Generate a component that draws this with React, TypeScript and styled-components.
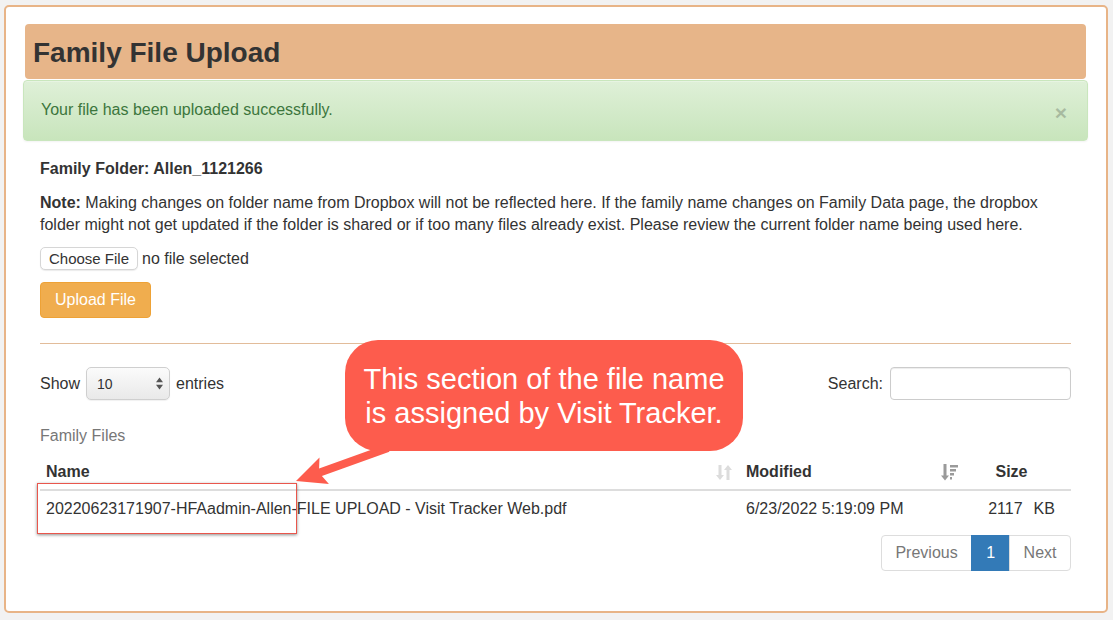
import React from "react";
import { createGlobalStyle, styled } from "styled-components";

const font = `"Liberation Sans", Arial, Helvetica, sans-serif`;
const orange = "#e8b487";

const GlobalCss = createGlobalStyle`
  html, body {
    margin: 0;
    padding: 0;
    background: #f2f2f2;
    color: #333;
    font-family: ${font};
    font-size: 16px;
    line-height: 22px;
  }
  * { box-sizing: border-box; }
`;

const Page = styled.div`
  padding: 5px 5px 6px 4px;
`;

const Panel = styled.div`
  position: relative;
  background: #fff;
  border: 2px solid ${orange};
  border-radius: 5px;
  padding: 17px 20px 40px 19px;
`;

const Heading = styled.h1`
  margin: 0;
  background: #e7b589;
  border-radius: 4px;
  padding: 13px 8px 11px;
  font-size: 28px;
  line-height: 31px;
  font-weight: 700;
  color: #333;
`;

const Alert = styled.div`
  display: flex;
  justify-content: space-between;
  align-items: flex-start;
  margin: 1px -2px 0;
  padding: 17.5px 20px 17.5px 17px;
  border: 1px solid #c9e6bd;
  border-radius: 4px;
  background: linear-gradient(to bottom, #dff0d8 0%, #c8e5bc 100%);
  box-shadow: inset 0 1px 0 rgba(255, 255, 255, 0.25), 0 1px 2px rgba(0, 0, 0, 0.05);
  color: #3c763d;
`;

const Close = styled.span`
  margin-top: 3px;
  font-size: 21px;
  line-height: 21px;
  font-weight: 700;
  color: #000;
  opacity: 0.2;
`;

const Body = styled.div`
  padding: 0 15px;
`;

const FolderTitle = styled.div`
  margin-top: 17px;
  font-weight: 700;
`;

const Note = styled.p`
  margin: 12px 0 0;
`;

const FileRow = styled.div`
  display: flex;
  align-items: center;
  gap: 4px;
  margin-top: 11px;
  height: 23px;
`;

const ChooseButton = styled.span`
  display: inline-flex;
  align-items: center;
  height: 23px;
  padding: 0 8px;
  font-size: 15px;
  border: 1px solid #d6d6d6;
  border-radius: 5px;
  background: #fff;
  box-shadow: 0 1px 1px rgba(0, 0, 0, 0.08);
`;

const UploadButton = styled.button`
  display: block;
  margin-top: 12px;
  height: 36px;
  padding: 0 14px;
  font-family: ${font};
  font-size: 16px;
  color: #fff;
  background: #f0ad4e;
  border: 1px solid #eea236;
  border-radius: 4px;
`;

const Rule = styled.hr`
  margin: 25px 0 0;
  border: 0;
  border-top: 1px solid #e2bc9a;
`;

const Controls = styled.div`
  display: flex;
  justify-content: space-between;
  align-items: center;
  margin-top: 23px;
`;

const Inline = styled.label`
  display: flex;
  align-items: center;
  gap: ${(p: { $gap: number }) => p.$gap}px;
`;

const SelectBox = styled.div`
  display: flex;
  align-items: center;
  justify-content: space-between;
  width: 84px;
  height: 33px;
  padding: 0 6px 0 10px;
  font-size: 14px;
  border: 1px solid #cfcfcf;
  border-radius: 5px;
  background: linear-gradient(to bottom, #fbfbfb 0%, #e9e9e9 100%);
  box-shadow: 0 1px 1px rgba(0, 0, 0, 0.06);
`;

const SearchInput = styled.div`
  width: 181px;
  height: 33px;
  border: 1px solid #ccc;
  border-radius: 4px;
  box-shadow: inset 0 1px 1px rgba(0, 0, 0, 0.075);
`;

const Caption = styled.div`
  margin-top: 25px;
  color: #777;
`;

const Table = styled.div`
  display: grid;
  grid-template-columns: 700px 226px 1fr;
  margin-top: 4px;
`;

const HeadCell = styled.div<{ $center?: boolean }>`
  display: flex;
  align-items: center;
  justify-content: ${(p) => (p.$center ? "center" : "space-between")};
  padding: ${(p) => (p.$center ? "10px 20px 6px 6px" : "10px 8px 6px 6px")};
  font-weight: 700;
  border-bottom: 2.5px solid #ddd;
`;

const Cell = styled.div<{ $center?: boolean }>`
  padding: 6.5px ${(p) => (p.$center ? "4px" : "8px")} 8px ${(p) => (p.$center ? "10px" : "6px")};
  text-align: ${(p) => (p.$center ? "center" : "left")};
`;

const Unit = styled.span`
  margin-left: 11px;
`;

const Pager = styled.div`
  display: flex;
  justify-content: flex-end;
  margin-top: 7.5px;
`;

const PageLink = styled.span<{ $active?: boolean; $pos?: "first" | "last" }>`
  display: inline-flex;
  align-items: center;
  height: 36px;
  padding: 0 ${(p) => (p.$active ? 14 : 13.5)}px;
  margin-left: -1px;
  color: ${(p) => (p.$active ? "#fff" : "#777")};
  background: ${(p) => (p.$active ? "#337ab7" : "#fff")};
  border: 1px solid ${(p) => (p.$active ? "#337ab7" : "#ddd")};
  border-radius: ${(p) =>
    p.$pos === "first" ? "4px 0 0 4px" : p.$pos === "last" ? "0 4px 4px 0" : "0"};
`;

/* callout drawn over the table */
const Bubble = styled.div`
  position: absolute;
  left: 339px;
  top: 333px;
  width: 398px;
  height: 111px;
  padding: 21.5px 0;
  border-radius: 33px;
  background: #fd5c4d;
  color: #fff;
  font-size: 29px;
  line-height: 34px;
  text-align: center;
`;

const Arrow = styled.svg`
  position: absolute;
  left: 284px;
  top: 433px;
`;

const Highlight = styled.div`
  position: absolute;
  left: 31px;
  top: 476px;
  width: 260px;
  height: 51px;
  border: 1px solid #e9564c;
  box-shadow: 0 1px 3px rgba(0, 0, 0, 0.45);
`;

function SortBoth() {
  return (
    <svg width="16" height="15" viewBox="0 0 16 15">
      <path d="M2.5 0h3v10h2.5l-4 5-4-5h2.5z M10.5 15h3V5h2.5l-4-5-4 5h2.5z" fill="#dcdcdc" />
    </svg>
  );
}

function SortDesc() {
  return (
    <svg width="17" height="17" viewBox="0 0 17 17">
      <path d="M2.5 0h3v11.5h2.5l-4 5-4-5h2.5z" fill="#9a9a9a" />
      <rect x="9" y="1" width="8" height="2.5" fill="#9a9a9a" />
      <rect x="9" y="5" width="6" height="2.5" fill="#9a9a9a" />
      <rect x="9" y="9" width="4" height="2.5" fill="#9a9a9a" />
      <rect x="9" y="13" width="2" height="2.5" fill="#9a9a9a" />
    </svg>
  );
}

function UpDown() {
  return (
    <svg width="7" height="13" viewBox="0 0 7 13">
      <path d="M0 5.2L3.5 0.5 7 5.2z M0 7.8L3.5 12.5 7 7.8z" fill="#555" />
    </svg>
  );
}

export default function App() {
  return (
    <Page>
      <GlobalCss />
      <Panel>
        <Heading>Family File Upload</Heading>
        <Alert>
          <span>Your file has been uploaded successfully.</span>
          <Close>×</Close>
        </Alert>
        <Body>
          <FolderTitle>Family Folder: Allen_1121266</FolderTitle>
          <Note>
            <b>Note:</b> Making changes on folder name from Dropbox will not be reflected here. If
            the family name changes on Family Data page, the dropbox folder might not get updated
            if the folder is shared or if too many files already exist. Please review the current
            folder name being used here.
          </Note>
          <FileRow>
            <ChooseButton>Choose File</ChooseButton>
            <span>no file selected</span>
          </FileRow>
          <UploadButton>Upload File</UploadButton>
          <Rule />
          <Controls>
            <Inline $gap={6}>
              Show
              <SelectBox>
                <span>10</span>
                <UpDown />
              </SelectBox>
              entries
            </Inline>
            <Inline $gap={7}>
              Search:
              <SearchInput />
            </Inline>
          </Controls>
          <Caption>Family Files</Caption>
          <Table>
            <HeadCell>
              <span>Name</span>
              <SortBoth />
            </HeadCell>
            <HeadCell>
              <span>Modified</span>
              <SortDesc />
            </HeadCell>
            <HeadCell $center>Size</HeadCell>
            <Cell>20220623171907-HFAadmin-Allen-FILE UPLOAD - Visit Tracker Web.pdf</Cell>
            <Cell>6/23/2022 5:19:09 PM</Cell>
            <Cell $center>
              2117<Unit>KB</Unit>
            </Cell>
          </Table>
          <Pager>
            <PageLink $pos="first">Previous</PageLink>
            <PageLink $active>1</PageLink>
            <PageLink $pos="last">Next</PageLink>
          </Pager>
        </Body>

        <Highlight />
        <Arrow width="110" height="60" viewBox="0 0 110 60">
          <polygon
            points="6,41 38.9,44 31.9,36 99.4,11.8 96.6,4.2 29.1,28.4 29.5,17.6"
            fill="#fd5c4d"
          />
        </Arrow>
        <Bubble>
          This section of the file name
          <br />
          is assigned by Visit Tracker.
        </Bubble>
      </Panel>
    </Page>
  );
}
